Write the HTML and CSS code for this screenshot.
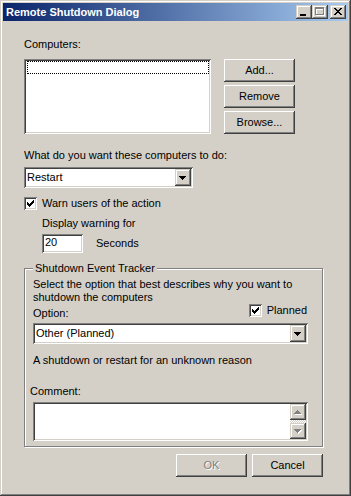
FILE: index.html
```html
<!DOCTYPE html>
<html lang="en">
<head>
    <meta charset="UTF-8">
    <title>Remote Shutdown Dialog</title>
    <link rel="stylesheet" href="styles.css">
</head>
<body>
    <div class="window">
        <div class="titlebar">
            <span class="title">Remote Shutdown Dialog</span>
            <div class="caption-btns">
                <span class="cap-btn">
                    <svg width="16" height="14" shape-rendering="crispEdges"><path d="M4 9h6v2H4z" fill="#000"/></svg>
                </span>
                <span class="cap-btn">
                    <svg width="16" height="14" shape-rendering="crispEdges" fill-rule="evenodd">
                        <path d="M4 3h9v8H4zM5 5h7v5H5z" fill="#fff"/>
                        <path d="M3 2h9v8H3zM4 4h7v5H4z" fill="#808080"/>
                    </svg>
                </span>
                <span class="cap-btn close">
                    <svg width="16" height="14" shape-rendering="crispEdges"><path d="M4 3h2v1H4zM10 3h2v1h-2zM5 4h2v1H5zM9 4h2v1H9zM6 5h4v1H6zM7 6h2v1H7zM6 7h4v1H6zM5 8h2v1H5zM9 8h2v1H9zM4 9h2v1H4zM10 9h2v1h-2z" fill="#000"/></svg>
                </span>
            </div>
        </div>

        <div class="content">
            <div class="label">Computers:</div>
            <div class="computers-row">
                <div class="field listbox">
                    <div class="focus-item"></div>
                </div>
                <div class="side-buttons">
                    <button class="btn">Add...</button>
                    <button class="btn">Remove</button>
                    <button class="btn">Browse...</button>
                </div>
            </div>

            <div class="label what">What do you want these computers to do:</div>
            <div class="field combo combo-action">
                <span class="combo-text">Restart</span>
                <span class="combo-arrow">
                    <svg width="16" height="17" shape-rendering="crispEdges"><path d="M4 7h7v1H4zM5 8h5v1H5zM6 9h3v1H6zM7 10h1v1H7z" fill="#000"/></svg>
                </span>
            </div>

            <div class="check-row warn">
                <span class="field checkbox">
                    <svg width="13" height="13" shape-rendering="crispEdges"><path d="M3 5h1v3H3zM4 6h1v3H4zM5 7h1v3H5zM6 6h1v3H6zM7 5h1v3H7zM8 4h1v3H8zM9 3h1v3H9z" fill="#000"/></svg>
                </span>
                <span>Warn users of the action</span>
            </div>

            <div class="label indent display">Display warning for</div>
            <div class="seconds-row indent">
                <div class="field edit">20</div>
                <span>Seconds</span>
            </div>

            <div class="group">
                <span class="group-title">Shutdown Event Tracker</span>
                <div class="label">Select the option that best describes why you want to</div>
                <div class="label">shutdown the computers</div>
                <div class="option-row">
                    <span class="option-label">Option:</span>
                    <span class="check-row planned">
                        <span class="field checkbox">
                            <svg width="13" height="13" shape-rendering="crispEdges"><path d="M3 5h1v3H3zM4 6h1v3H4zM5 7h1v3H5zM6 6h1v3H6zM7 5h1v3H7zM8 4h1v3H8zM9 3h1v3H9z" fill="#000"/></svg>
                        </span>
                        <span>Planned</span>
                    </span>
                </div>
                <div class="field combo combo-reason">
                    <span class="combo-text">Other (Planned)</span>
                    <span class="combo-arrow">
                        <svg width="16" height="17" shape-rendering="crispEdges"><path d="M4 7h7v1H4zM5 8h5v1H5zM6 9h3v1H6zM7 10h1v1H7z" fill="#000"/></svg>
                    </span>
                </div>
                <div class="label reason">A shutdown or restart for an unknown reason</div>
                <div class="label comment">Comment:</div>
                <div class="field memo">
                    <div class="scrollbar">
                        <span class="scroll-btn">
                            <svg width="16" height="16" shape-rendering="crispEdges">
                                <path d="M8 7h1v1H8zM7 8h3v1H7zM6 9h5v1H6zM5 10h7v1H5z" fill="#fff"/>
                                <path d="M7 6h1v1H7zM6 7h3v1H6zM5 8h5v1H5zM4 9h7v1H4z" fill="#808080"/>
                            </svg>
                        </span>
                        <span class="scroll-track"></span>
                        <span class="scroll-btn">
                            <svg width="16" height="16" shape-rendering="crispEdges">
                                <path d="M5 7h7v1H5zM6 8h5v1H6zM7 9h3v1H7zM8 10h1v1H8z" fill="#fff"/>
                                <path d="M4 6h7v1H4zM5 7h5v1H5zM6 8h3v1H6zM7 9h1v1H7z" fill="#808080"/>
                            </svg>
                        </span>
                    </div>
                </div>
            </div>

            <div class="dialog-buttons">
                <button class="btn" disabled>OK</button>
                <button class="btn">Cancel</button>
            </div>
        </div>
    </div>
</body>
</html>
```

FILE: styles.css
```css
* {
    box-sizing: border-box;
    margin: 0;
    padding: 0;
}

body {
    background-color: #d4d0c8;
    font-family: 'Liberation Sans', Arial, sans-serif;
    font-size: 11px;
    line-height: 13px;
    color: #000;
}

/* janela com moldura 3D */
.window {
    width: 351px;
    height: 496px;
    padding: 3px;
    background-color: #d4d0c8;
    box-shadow: inset -1px -1px #404040, inset 1px 1px #d4d0c8,
                inset -2px -2px #808080, inset 2px 2px #fff;
}

.titlebar {
    display: flex;
    align-items: center;
    justify-content: space-between;
    height: 18px;
    padding: 0 2px 0 3px;
    background: linear-gradient(to right, #0a246a, #a6caf0);
}

.title {
    color: #fff;
    font-weight: bold;
}

.caption-btns {
    display: flex;
}

.cap-btn,
.combo-arrow,
.scroll-btn {
    display: block;
    background-color: #d4d0c8;
    box-shadow: inset -1px -1px #404040, inset 1px 1px #d4d0c8,
                inset -2px -2px #808080, inset 2px 2px #fff;
}

.cap-btn {
    width: 16px;
    height: 14px;
}

.cap-btn.close {
    margin-left: 2px;
}

svg {
    display: block;
}

.content {
    padding: 17px 25px 0 21px;
}

/* campos afundados */
.field {
    background-color: #fff;
    padding: 2px;
    box-shadow: inset 1px 1px #808080, inset -1px -1px #fff,
                inset 2px 2px #404040, inset -2px -2px #d4d0c8;
}

.computers-row {
    display: flex;
    gap: 13px;
    margin-top: 8px;
}

.listbox {
    width: 187px;
    height: 75px;
}

.focus-item {
    height: 13px;
    margin-left: 1px;
    border: 1px dotted #000;
}

.side-buttons {
    display: flex;
    flex-direction: column;
    gap: 3px;
}

.btn {
    display: flex;
    align-items: center;
    justify-content: center;
    width: 71px;
    height: 23px;
    border: none;
    background-color: #d4d0c8;
    font: inherit;
    color: #000;
    box-shadow: inset -1px -1px #404040, inset 1px 1px #fff,
                inset -2px -2px #808080, inset 2px 2px #d4d0c8;
}

.btn:disabled {
    color: #808080;
    text-shadow: 1px 1px #fff;
}

.what {
    margin-top: 15px;
}

.combo {
    display: flex;
    align-items: center;
    justify-content: space-between;
    height: 21px;
}

.combo-text {
    padding-left: 1px;
}

.combo-arrow {
    width: 16px;
    height: 17px;
}

.combo-action {
    width: 169px;
    margin-top: 5px;
}

.check-row {
    display: flex;
    align-items: center;
    gap: 5px;
}

.warn {
    margin-top: 9px;
}

.checkbox {
    width: 13px;
    height: 13px;
    padding: 0;
}

.indent {
    margin-left: 18px;
}

.display {
    margin-top: 7px;
}

.seconds-row {
    display: flex;
    align-items: center;
    gap: 13px;
    margin-top: 4px;
}

.edit {
    width: 41px;
    height: 19px;
    padding: 2px 3px;
}

/* caixa de grupo */
.group {
    position: relative;
    margin-top: 15px;
    padding: 9px 14px 5px 8px;
    border: 1px solid #808080;
    box-shadow: inset 1px 1px #fff, 1px 1px #fff;
}

.group-title {
    position: absolute;
    top: -7px;
    left: 8px;
    padding: 0 2px;
    background-color: #d4d0c8;
}

.option-row {
    display: flex;
    justify-content: space-between;
    height: 16px;
}

.option-label {
    align-self: flex-end;
}

.planned {
    align-self: flex-start;
    margin-right: 1px;
}

.combo-reason {
    margin-top: 3px;
}

.reason {
    margin-top: 10px;
}

.comment {
    margin-top: 18px;
    margin-left: -3px;
}

.memo {
    display: flex;
    justify-content: flex-end;
    height: 39px;
    margin-top: 4px;
}

.scrollbar {
    display: flex;
    flex-direction: column;
    width: 16px;
}

.scroll-btn {
    height: 16px;
}

.scroll-track {
    flex: 1;
    background: repeating-conic-gradient(#d4d0c8 0 25%, #fff 0 50%) 0 0 / 2px 2px;
}

.dialog-buttons {
    display: flex;
    justify-content: flex-end;
    gap: 5px;
    margin-top: 7px;
}
```
